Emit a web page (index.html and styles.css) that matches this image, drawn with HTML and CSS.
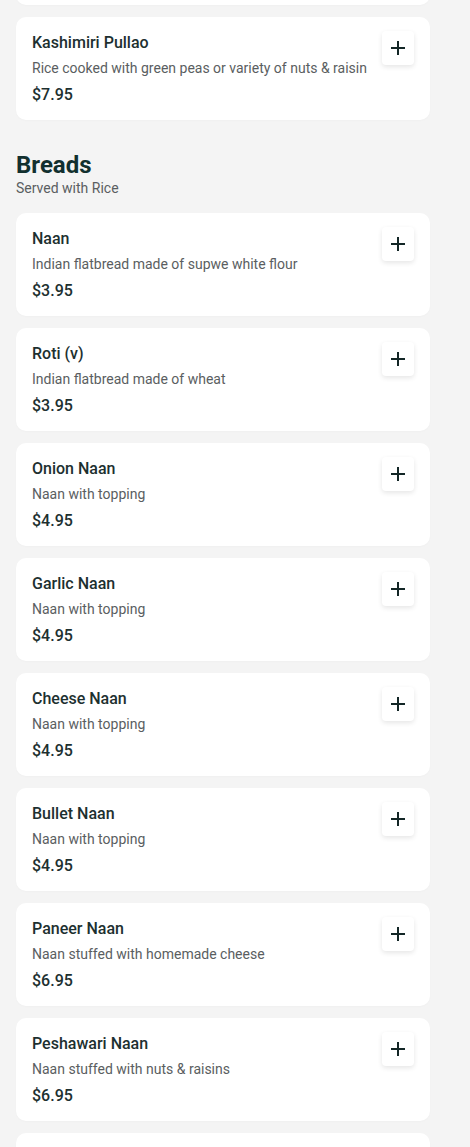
FILE: index.html
```html
<!DOCTYPE html>
<html>
<head>
<meta charset="utf-8">
<link rel="stylesheet" href="styles.css">
</head>
<body>
<main class="menu">
  <section class="category">
    <div class="items">
      <div class="card card-stub" aria-hidden="true"></div>
      <div class="card">
        <div class="info">
          <div class="name">Kashimiri Pullao</div>
          <div class="desc">Rice cooked with green peas or variety of nuts &amp; raisin</div>
          <div class="price">$7.95</div>
        </div>
        <button class="add" aria-label="Add"><svg viewBox="0 0 16 16" width="16" height="16"><path d="M8 1v14M1 8h14" stroke="currentColor" stroke-width="2" fill="none"/></svg></button>
      </div>
    </div>
  </section>

  <section class="category">
    <header class="cat-head">
      <h2 class="cat-title">Breads</h2>
      <p class="cat-sub">Served with Rice</p>
    </header>
    <div class="items">
      <div class="card">
        <div class="info">
          <div class="name">Naan</div>
          <div class="desc">Indian flatbread made of supwe white flour</div>
          <div class="price">$3.95</div>
        </div>
        <button class="add" aria-label="Add"><svg viewBox="0 0 16 16" width="16" height="16"><path d="M8 1v14M1 8h14" stroke="currentColor" stroke-width="2" fill="none"/></svg></button>
      </div>
      <div class="card">
        <div class="info">
          <div class="name">Roti (v)</div>
          <div class="desc">Indian flatbread made of wheat</div>
          <div class="price">$3.95</div>
        </div>
        <button class="add" aria-label="Add"><svg viewBox="0 0 16 16" width="16" height="16"><path d="M8 1v14M1 8h14" stroke="currentColor" stroke-width="2" fill="none"/></svg></button>
      </div>
      <div class="card">
        <div class="info">
          <div class="name">Onion Naan</div>
          <div class="desc">Naan with topping</div>
          <div class="price">$4.95</div>
        </div>
        <button class="add" aria-label="Add"><svg viewBox="0 0 16 16" width="16" height="16"><path d="M8 1v14M1 8h14" stroke="currentColor" stroke-width="2" fill="none"/></svg></button>
      </div>
      <div class="card">
        <div class="info">
          <div class="name">Garlic Naan</div>
          <div class="desc">Naan with topping</div>
          <div class="price">$4.95</div>
        </div>
        <button class="add" aria-label="Add"><svg viewBox="0 0 16 16" width="16" height="16"><path d="M8 1v14M1 8h14" stroke="currentColor" stroke-width="2" fill="none"/></svg></button>
      </div>
      <div class="card">
        <div class="info">
          <div class="name">Cheese Naan</div>
          <div class="desc">Naan with topping</div>
          <div class="price">$4.95</div>
        </div>
        <button class="add" aria-label="Add"><svg viewBox="0 0 16 16" width="16" height="16"><path d="M8 1v14M1 8h14" stroke="currentColor" stroke-width="2" fill="none"/></svg></button>
      </div>
      <div class="card">
        <div class="info">
          <div class="name">Bullet Naan</div>
          <div class="desc">Naan with topping</div>
          <div class="price">$4.95</div>
        </div>
        <button class="add" aria-label="Add"><svg viewBox="0 0 16 16" width="16" height="16"><path d="M8 1v14M1 8h14" stroke="currentColor" stroke-width="2" fill="none"/></svg></button>
      </div>
      <div class="card">
        <div class="info">
          <div class="name">Paneer Naan</div>
          <div class="desc">Naan stuffed with homemade cheese</div>
          <div class="price">$6.95</div>
        </div>
        <button class="add" aria-label="Add"><svg viewBox="0 0 16 16" width="16" height="16"><path d="M8 1v14M1 8h14" stroke="currentColor" stroke-width="2" fill="none"/></svg></button>
      </div>
      <div class="card">
        <div class="info">
          <div class="name">Peshawari Naan</div>
          <div class="desc">Naan stuffed with nuts &amp; raisins</div>
          <div class="price">$6.95</div>
        </div>
        <button class="add" aria-label="Add"><svg viewBox="0 0 16 16" width="16" height="16"><path d="M8 1v14M1 8h14" stroke="currentColor" stroke-width="2" fill="none"/></svg></button>
      </div>
      <div class="card card-stub" aria-hidden="true"></div>
    </div>
  </section>
</main>
</body>
</html>
```
FILE: styles.css
```css
* { box-sizing: border-box; }
html, body { margin: 0; padding: 0; }
body {
  background: #f4f4f4;
  font-family: Roboto, "Liberation Sans", Arial, sans-serif;
  color: #1b2b2b;
}
.menu {
  width: 414px;
  margin: -98px 0 0 16px;
  display: flex;
  flex-direction: column;
  gap: 30px;
}
.items {
  display: flex;
  flex-direction: column;
  gap: 12px;
}
.card {
  background: #fff;
  border-radius: 10px;
  padding: 16px;
  display: flex;
  align-items: flex-start;
  justify-content: space-between;
  height: 103px;
  box-shadow: 0 1px 2px rgba(0,0,0,0.02);
}
.info { display: flex; flex-direction: column; }
.name {
  font-size: 16px;
  font-weight: 500;
  line-height: 20px;
  color: #1d3030;
}
.desc {
  font-size: 14px;
  line-height: 20px;
  color: #5a5e61;
  margin-top: 5px;
}
.price {
  font-size: 16px;
  font-weight: 500;
  line-height: 21px;
  margin-top: 6px;
  color: #1d3030;
}
.add {
  width: 32px;
  height: 34px;
  margin-top: -2px;
  border: none;
  background: #fff;
  border-radius: 4px;
  box-shadow: 0 2px 5px rgba(0,0,0,0.10);
  display: flex;
  align-items: center;
  justify-content: center;
  padding: 0;
  color: #132626;
  flex: none;
}
.add svg { display: block; }
.cat-head { margin-bottom: 15px; }
.cat-title {
  margin: 0;
  font-size: 24px;
  line-height: 30px;
  font-weight: 700;
  color: #12302f;
}
.cat-sub {
  margin: -2px 0 0 0;
  font-size: 14px;
  line-height: 20px;
  color: #5a5e61;
}
```
